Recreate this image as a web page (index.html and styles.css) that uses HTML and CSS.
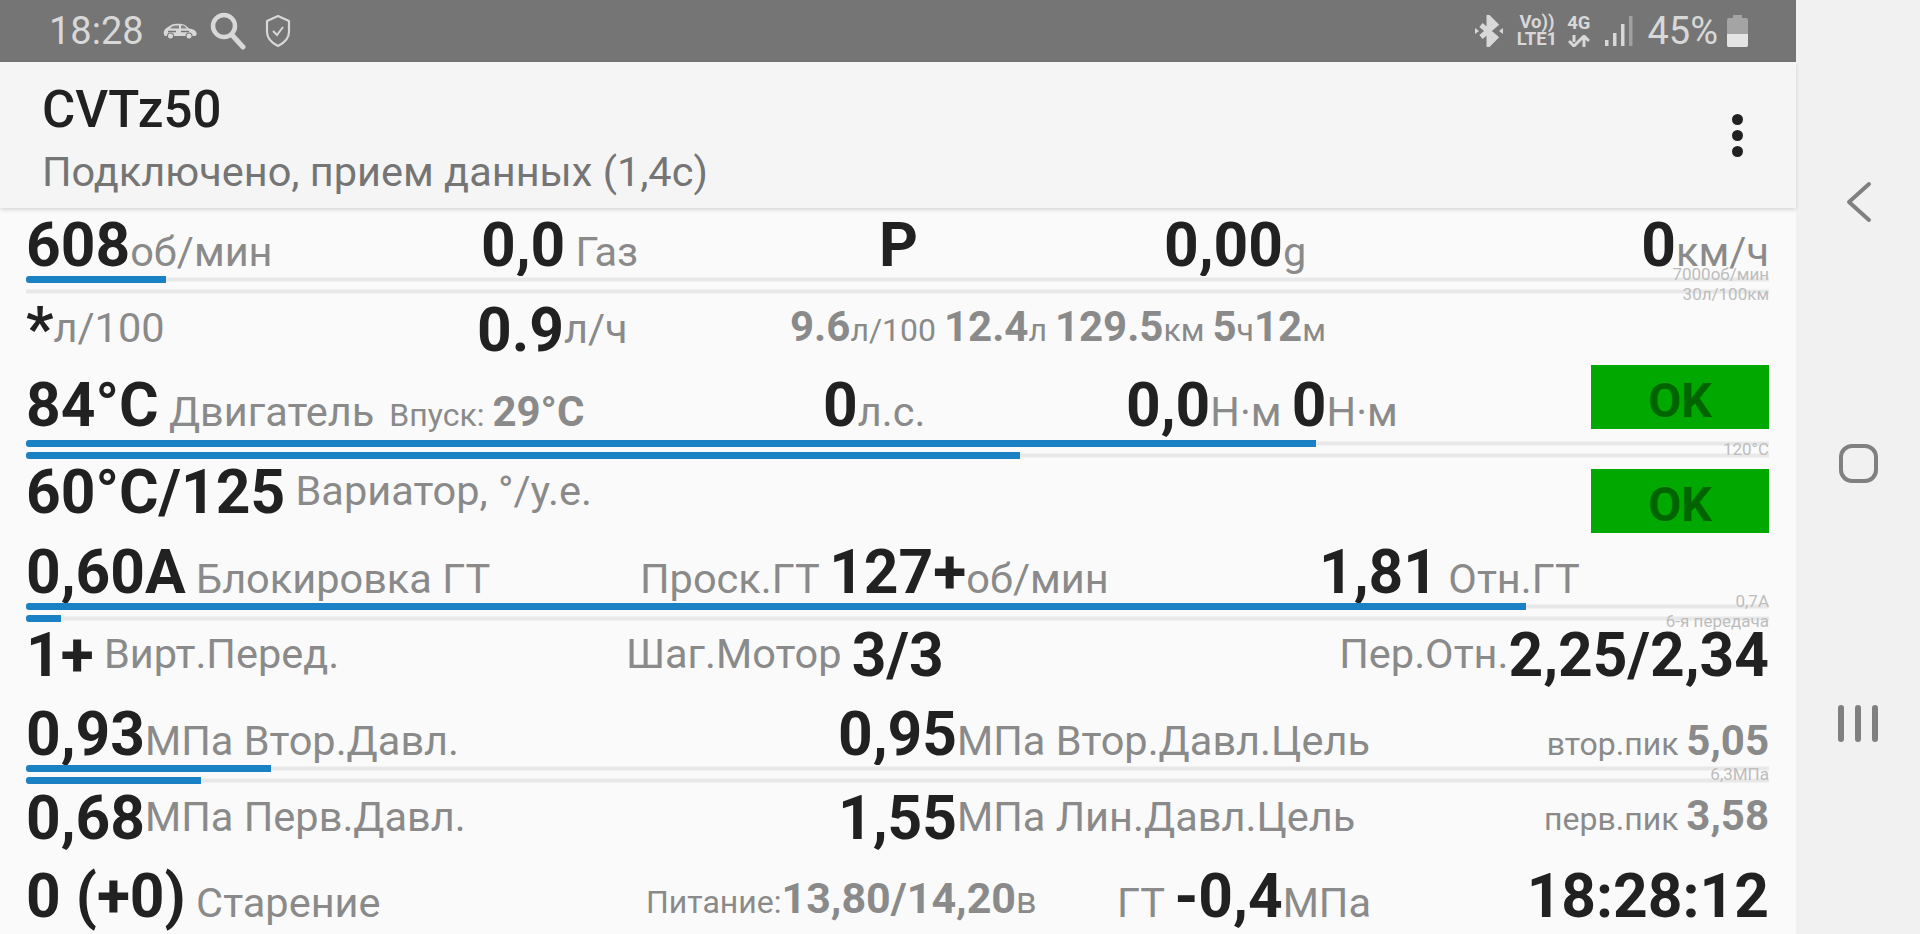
FILE: index.html
```html
<!DOCTYPE html>
<html lang="ru">
<head>
    <meta charset="UTF-8">
    <title>CVTz50</title>
    <link rel="stylesheet" href="styles.css">
</head>
<body>
<div class="screen">
    <div class="main">
        <div class="statusbar">
            <div class="status-left">
                <span class="clock">18:28</span>
                <svg class="ic-car" viewBox="0 0 34 16">
                    <path d="M1 11C0 8 2 6 5 4L9 1.500C12 .5 19 .5 22 2L26 5.500C30 6 33 7.500 33.500 10C34 12 33 13 31.500 13H29.500A3.500 3.500 0 0 0 22.500 13H11A3.500 3.500 0 0 0 4 13H2.500C1.500 13 1 12 1 11Z" fill="#d8d8d8"/>
                    <circle cx="7.500" cy="13" r="2.500" fill="#d8d8d8"/>
                    <circle cx="26" cy="13" r="2.500" fill="#d8d8d8"/>
                    <path d="M9 3.500L12 2.500H16V5.500H7ZM18 2.500H21L24 5.500H18Z" fill="#858585"/>
                    <path d="M5 8.500H13M18 8.500H26" stroke="#757575" stroke-width="1.400"/>
                </svg>
                <svg class="ic-search" viewBox="0 0 36 38"><circle cx="14" cy="14" r="11" fill="none" stroke="#d8d8d8" stroke-width="4.500"/><path d="M22 23l11 12" stroke="#d8d8d8" stroke-width="5" stroke-linecap="round"/></svg>
                <svg class="ic-shield" viewBox="0 0 26 34"><path d="M13 2l11 5v11c0 6-5 11-11 14C7 29 2 24 2 18V7z" fill="none" stroke="#d8d8d8" stroke-width="2.200" stroke-linejoin="round"/><path d="M8 17l4 4 6-8" fill="none" stroke="#d8d8d8" stroke-width="2"/></svg>
            </div>
            <div class="status-right">
                <svg class="ic-bt" viewBox="0 0 28 32"><path d="M14 16V3l6.500 6.500L6 22M14 16v13l6.500-6.500L6 10" fill="none" stroke="#d8d8d8" stroke-width="5"/><path d="M0 13l4 3-4 3zM28 13l-4 3 4 3z" fill="#d8d8d8"/></svg>
                <div class="net-text"><span>Vo))</span><span>LTE1</span></div>
                <div class="net-text net-4g">
                    <span>4G</span>
                    <svg class="ic-arrows" viewBox="0 0 22 12"><path d="M6 0v7M1 6l5 5 5-5M16 12V4M11 6l5-5 5 5" fill="none" stroke="#d8d8d8" stroke-width="3"/></svg>
                </div>
                <svg class="ic-signal" viewBox="0 0 28 30"><rect x="0" y="24" width="3.500" height="6" fill="#d8d8d8"/><rect x="8" y="17" width="3.500" height="13" fill="#d8d8d8"/><rect x="16" y="8" width="3.500" height="22" fill="#d8d8d8"/><rect x="24" y="0" width="3.500" height="30" fill="#a0a0a0"/></svg>
                <span class="batt-text">45%</span>
                <svg class="ic-batt" viewBox="0 0 21 32"><path d="M6 0h9v3h4a2 2 0 0 1 2 2v25a2 2 0 0 1-2 2H2a2 2 0 0 1-2-2V5a2 2 0 0 1 2-2h4z" fill="#a4a4a4"/><path d="M0 19h21v11a2 2 0 0 1-2 2H2a2 2 0 0 1-2-2z" fill="#e4e4e4"/></svg>
            </div>
        </div>
        <div class="appbar">
            <div class="appbar-titles">
                <div class="title">CVTz50</div>
                <div class="subtitle">Подключено, прием данных (1,4с)</div>
            </div>
            <div class="dots"><i></i><i></i><i></i></div>
        </div>
        <div class="board">
            <div class="row r1">
                <div><b>608</b><span class="u">об/мин</span></div>
                <div><b>0,0</b><span class="u"> Газ</span></div>
                <div><b>P</b></div>
                <div><b>0,00</b><span class="u">g</span></div>
                <div class="right"><b>0</b><span class="u">км/ч</span></div>
            </div>
            <div class="bars">
                <div class="track"><div class="fill" style="width:140px"></div></div>
                <div class="track"></div>
                <span class="scale s1">7000об/мин</span>
                <span class="scale s2">30л/100км</span>
            </div>
            <div class="row r2">
                <div class="lift"><b class="star">*</b><span class="u">л/100</span></div>
                <div><b>0.9</b><span class="u up">л/ч</span></div>
                <div class="summary"><b>9.6</b><span>л/100</span> <b>12.4</b><span>л</span> <b>129.5</b><span>км</span> <b>5</b><span>ч</span><b>12</b><span>м</span></div>
            </div>
            <div class="row r3">
                <div><b>84°C</b><span class="u"> Двигатель</span><span class="note">Впуск: </span><b class="grey">29°C</b></div>
                <div><b>0</b><span class="u">л.с.</span></div>
                <div><b>0,0</b><span class="u">Н·м </span><b>0</b><span class="u">Н·м</span></div>
                <div class="ok ok-a">OK</div>
            </div>
            <div class="bars">
                <div class="track"><div class="fill" style="width:1290px"></div></div>
                <div class="track"><div class="fill" style="width:994px"></div></div>
                <span class="scale s0">120°C</span>
            </div>
            <div class="row r4">
                <div><b>60°C/125</b><span class="u up"> Вариатор, °/у.е.</span></div>
                <div class="ok ok-b">OK</div>
            </div>
            <div class="row r5">
                <div><b>0,60A</b><span class="u"> Блокировка ГТ</span></div>
                <div><span class="u">Проск.ГТ </span><b>127+</b><span class="u">об/мин</span></div>
                <div><b>1,81</b><span class="u"> Отн.ГТ</span></div>
            </div>
            <div class="bars">
                <div class="track"><div class="fill" style="width:1500px"></div></div>
                <div class="track"><div class="fill" style="width:35px"></div></div>
                <span class="scale s1">0,7A</span>
                <span class="scale s2">6-я передача</span>
            </div>
            <div class="row r6">
                <div><b>1+</b><span class="u up"> Вирт.Перед.</span></div>
                <div><span class="u up">Шаг.Мотор </span><b>3/3</b></div>
                <div class="right"><span class="u up">Пер.Отн.</span><b>2,25/2,34</b></div>
            </div>
            <div class="row r7">
                <div><b>0,93</b><span class="u">МПа Втор.Давл.</span></div>
                <div><b>0,95</b><span class="u">МПа Втор.Давл.Цель</span></div>
                <div class="right"><span class="peak">втор.пик </span><b class="grey">5,05</b></div>
            </div>
            <div class="bars">
                <div class="track"><div class="fill" style="width:245px"></div></div>
                <div class="track"><div class="fill" style="width:175px"></div></div>
                <span class="scale s0">6,3МПа</span>
            </div>
            <div class="row r8">
                <div><b>0,68</b><span class="u up">МПа Перв.Давл.</span></div>
                <div><b>1,55</b><span class="u up">МПа Лин.Давл.Цель</span></div>
                <div class="right lift"><span class="peak">перв.пик </span><b class="grey">3,58</b></div>
            </div>
            <div class="row r9">
                <div><b>0 (+0)</b><span class="u"> Старение</span></div>
                <div class="lift-s"><span class="note">Питание:</span><b class="grey">13,80/14,20</b><span class="u small">в</span></div>
                <div><span class="u">ГТ </span><b>-0,4</b><span class="u">МПа</span></div>
                <div class="right"><b>18:28:12</b></div>
            </div>
        </div>
    </div>
    <div class="navbar">
        <svg class="nav-back" viewBox="0 0 26 42"><path d="M23 3L3 21l20 18" fill="none" stroke="#808080" stroke-width="4" stroke-linecap="round" stroke-linejoin="round"/></svg>
        <div class="nav-home"></div>
        <div class="nav-recent"><i></i><i></i><i></i></div>
    </div>
</div>
</body>
</html>
```

FILE: styles.css
```css
html, body {
    margin: 0;
    padding: 0;
    overflow: hidden;
}
body {
    font-family: Roboto, "Noto Sans", sans-serif;
    background: #f1f1f1;
}
.screen {
    display: flex;
    width: 1920px;
    height: 934px;
    overflow: hidden;
}
.main {
    width: 1796px;
    display: flex;
    flex-direction: column;
}

/* status bar */
.statusbar {
    height: 62px;
    background: #757575;
    color: #d8d8d8;
    display: flex;
    justify-content: space-between;
    align-items: center;
    flex-shrink: 0;
}
.status-left {
    display: flex;
    align-items: center;
    padding-left: 49px;
}
.clock { font-size: 38px; }
.ic-car { width: 34px; height: 16px; margin-left: 19px; }
.ic-search { width: 36px; height: 38px; margin-left: 13px; }
.ic-shield { width: 26px; height: 34px; margin-left: 19px; }
.status-right {
    display: flex;
    align-items: center;
    padding-right: 48px;
}
.ic-bt { width: 28px; height: 32px; }
.net-text {
    display: flex;
    flex-direction: column;
    align-items: center;
    font-size: 18.500px;
    font-weight: 700;
    line-height: 17px;
    margin-left: 14px;
}
.net-4g { margin-left: 10px; }
.ic-arrows { width: 22px; height: 12px; margin-top: 3px; }
.ic-signal { width: 28px; height: 30px; margin-left: 15px; }
.batt-text { font-size: 38px; margin-left: 14px; }
.ic-batt { width: 21px; height: 32px; margin-left: 9px; }

/* app bar */
.appbar {
    height: 146px;
    background: #f5f5f5;
    box-shadow: 0 2px 4px rgba(0,0,0,0.14);
    display: flex;
    justify-content: space-between;
    align-items: center;
    padding: 0 53px 0 42px;
    position: relative;
    flex-shrink: 0;
}
.appbar-titles { padding-top: 10px; }
.title {
    font-size: 51px;
    font-weight: 500;
    color: #212121;
    line-height: 64px;
}
.subtitle {
    font-size: 41.500px;
    color: #757575;
    line-height: 60px;
}
.dots {
    display: flex;
    flex-direction: column;
    gap: 5px;
}
.dots i {
    width: 11px;
    height: 11px;
    border-radius: 50%;
    background: #212121;
}

/* data rows */
.board {
    flex: 1;
    background: #fafafa;
    padding: 0 27px 0 26px;
    overflow: hidden;
}
.row {
    display: grid;
    height: 58px;
    font-size: 60.500px;
    line-height: 60px;
    align-items: baseline;
    white-space: nowrap;
    color: #212121;
}
.row b { font-weight: 700; }
.row .grey { color: #8a8a8a; font-size: 42px; line-height: 30px; }
.r9 .grey { font-size: 43px; }
.star { vertical-align: -8px; }
.u {
    font-size: 41.500px;
    line-height: 30px;
    color: #8a8a8a;
}
.u.small { font-size: 36px; }
.u.up { vertical-align: 8px; }
.note {
    font-size: 32px;
    line-height: 30px;
    color: #8a8a8a;
    margin-left: 15px;
}
.lift-s .note { margin-left: 0; }
.peak {
    font-size: 32px;
    line-height: 30px;
    color: #8a8a8a;
}
.lift { align-self: start; margin-top: -9px; }
.lift-s > * { vertical-align: 4px; }
.right { text-align: right; }
.summary {
    font-size: 32px;
    line-height: 30px;
    color: #8a8a8a;
    align-self: start;
    margin-top: 11px;
}
.summary b { font-size: 42px; }
.ok {
    background: #00a800;
    color: #006400;
    font-size: 48px;
    font-weight: 700;
    line-height: 71px;
    height: 64px;
    text-align: center;
    align-self: start;
    overflow: hidden;
}
.ok-a { margin-top: -11px; }
.ok-b { margin-top: 6px; }

.r1 { margin-top: 8px; height: 59px; grid-template-columns: 455px 398px 285px 1fr auto; }
.r2 { margin-top: 6px; grid-template-columns: 451px 313px 1fr; }
.r3 { margin-top: 17px; height: 63px; grid-template-columns: 797px 303px 465px 178px; }
.r4 { margin-top: 4px; grid-template-columns: 1fr 178px; }
.r5 { margin-top: 22px; height: 59px; grid-template-columns: 614px 679px 1fr; }
.r6 { margin-top: 4px; grid-template-columns: 600px 1fr auto; }
.r7 { margin-top: 21px; height: 59px; grid-template-columns: 812px 1fr auto; }
.r8 { margin-top: 5px; grid-template-columns: 812px 1fr auto; }
.r9 { margin-top: 20px; grid-template-columns: 620px 471px 1fr auto; }

/* progress bars */
.bars {
    position: relative;
    margin-top: 1px;
    display: flex;
    flex-direction: column;
    gap: 5px;
}
.track {
    height: 7px;
    background: linear-gradient(#fafafa 1px, #e8e8e8 2px, #e8e8e8 5px, #fafafa 6px);
}
.fill {
    height: 7px;
    background: #1a82c4;
    border-radius: 3px 0 0 3px;
}
.scale {
    position: absolute;
    right: 0;
    font-size: 17px;
    line-height: 20px;
    color: #bdbdbd;
}
.s0 { top: -1px; }
.s1 { top: -12px; }
.s2 { top: 8px; }

/* navigation bar */
.navbar {
    width: 124px;
    background: #f1f1f1;
    display: flex;
    flex-direction: column;
    align-items: center;
}
.nav-back { width: 26px; height: 42px; margin-top: 181px; margin-left: 1px; }
.nav-home {
    width: 31px;
    height: 31px;
    border: 4.500px solid #808080;
    border-radius: 13px;
    margin-top: 221px;
}
.nav-recent {
    display: flex;
    gap: 11px;
    margin-top: 222px;
}
.nav-recent i {
    width: 6px;
    height: 37px;
    border-radius: 3px;
    background: #808080;
}
```
